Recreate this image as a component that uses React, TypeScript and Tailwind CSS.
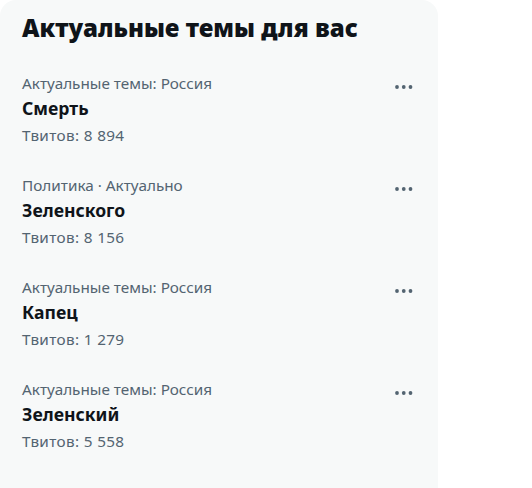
const trends = [
  { category: 'Актуальные темы: Россия', name: 'Смерть', count: 'Твитов: 8 894' },
  { category: 'Политика · Актуально', name: 'Зеленского', count: 'Твитов: 8 156' },
  { category: 'Актуальные темы: Россия', name: 'Капец', count: 'Твитов: 1 279' },
  { category: 'Актуальные темы: Россия', name: 'Зеленский', count: 'Твитов: 5 558' },
];

function MoreDots() {
  return (
    <svg width="18" height="6" viewBox="0 0 18 6" className="mt-[11px] shrink-0" fill="#536471">
      <circle cx="2" cy="3" r="1.9" />
      <circle cx="8.75" cy="3" r="1.9" />
      <circle cx="15.5" cy="3" r="1.9" />
    </svg>
  );
}

export default function App() {
  return (
    <div className="w-[532px] h-[488px] bg-white overflow-hidden" style={{ fontFamily: '"Noto Sans", Roboto, sans-serif' }}>
      <div className="w-[438px] min-h-[520px] rounded-t-2xl bg-[#f7f9f9]">
        <div className="pl-[22px] pt-[13px] pb-[15px]">
          <h2 className="text-[24.1px] leading-[30px] font-black text-[#0f1419]">Актуальные темы для вас</h2>
        </div>
        {trends.map((t, i) => (
          <div key={i} className="flex items-start justify-between pl-[22px] pr-[25px] py-[15px]">
            <div className="flex flex-col">
              <span className="text-[15.3px] leading-[20px] text-[#536471]">{t.category}</span>
              <span className="mt-[3px] text-[17.6px] leading-[25px] font-bold text-[#0f1419]">{t.name}</span>
              <span className="mt-[4px] text-[15.3px] leading-[20px] tracking-[0.35px] text-[#536471]">{t.count}</span>
            </div>
            <MoreDots />
          </div>
        ))}
      </div>
    </div>
  );
}
